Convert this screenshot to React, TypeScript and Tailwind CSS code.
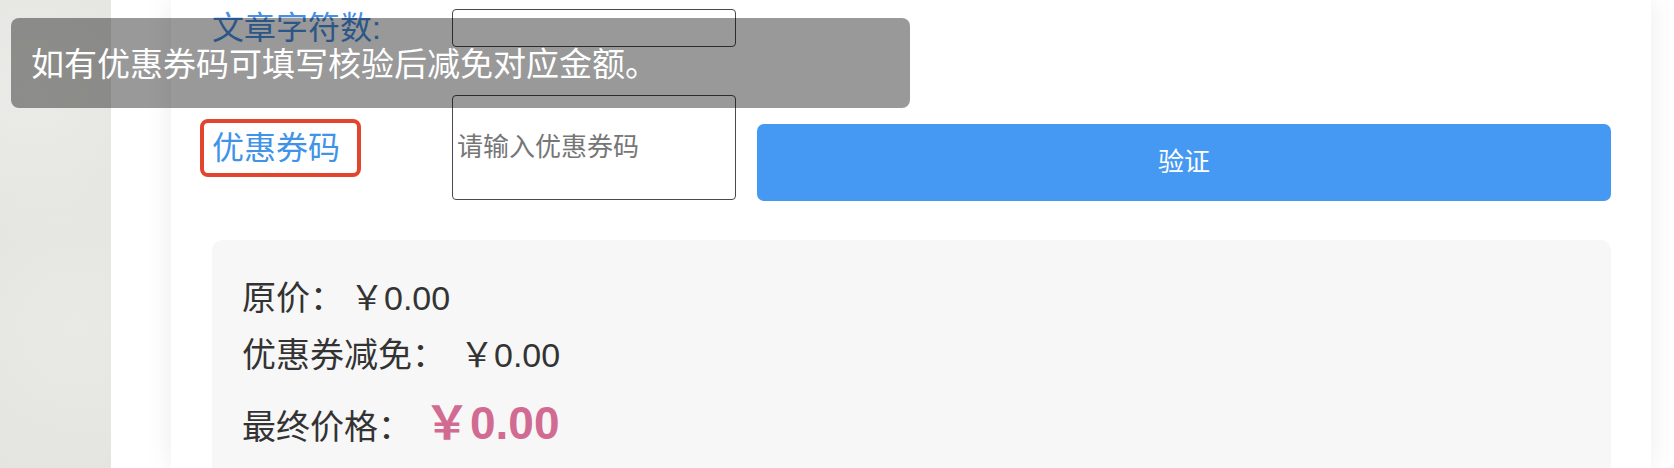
import React from "react";

export default function App() {
  return (
    <div className="relative flex h-[468px] w-[1674px] overflow-hidden bg-white font-['Liberation_Sans','Noto_Sans_CJK_SC',sans-serif]">
      {/* textured side strip */}
      <div className="h-full w-[111px] shrink-0 bg-[#e4e4e0] bg-[radial-gradient(circle_at_30%_20%,#ebebe7_0,transparent_40%),radial-gradient(circle_at_70%_70%,#e9e9e5_0,transparent_45%)]" />

      {/* main page */}
      <div className="flex h-full flex-1 bg-white pl-[60px]">
        <div className="h-full w-[1480px] shrink-0 bg-white pl-[41px] pr-[40px] pt-[9px] shadow-[0_0_28px_rgba(0,0,0,0.08)]">
          {/* row 1 */}
          <div className="flex h-[38px] items-center">
            <div className="w-[240px] text-[32px] leading-[38px] text-[#4a90e2]">文章字符数:</div>
            <div className="h-[38px] w-[284px] rounded-[4px] border-[1.5px] border-[#4a4a4a] bg-white" />
          </div>

          {/* row 2 */}
          <div className="mt-[48px] flex items-center">
            <div className="w-[240px]">
              <span className="relative inline-block text-[32px] leading-[48px] text-[#4193e8]">
                优惠券码
                <span className="absolute bottom-[-5px] left-[-12px] right-[-21px] top-[-5px] rounded-[8px] border-[4px] border-[#e2442d]" />
              </span>
            </div>
            <div className="flex h-[105px] w-[284px] items-center rounded-[4px] border-[1.5px] border-[#4a4a4a] bg-white pl-[4px] text-[26px] text-[#767676]">
              请输入优惠券码
            </div>
            <button className="ml-[21px] mb-[-1px] flex h-[77px] w-[854px] items-center justify-center self-end rounded-[7px] bg-[#4699f2] text-[26px] text-white">
              验证
            </button>
          </div>

          {/* summary */}
          <div className="mt-[40px] h-[260px] w-[1399px] rounded-[10px] bg-[#f7f7f7] pl-[30px] pt-[30px] text-[34px] text-[#333333]">
            <div className="flex h-[57px] items-center leading-[57px]">
              <span>原价：</span>
              <span className="ml-[6px]">￥0.00</span>
            </div>
            <div className="flex h-[57px] items-center leading-[57px]">
              <span>优惠券减免：</span>
              <span className="ml-[14px]">￥0.00</span>
            </div>
            <div className="mt-[5px] flex h-[68px] items-baseline leading-[68px]">
              <span>最终价格：</span>
              <span className="ml-[12px] text-[46px] font-bold text-[#d16b92]">￥0.00</span>
            </div>
          </div>
        </div>
      </div>

      {/* toast */}
      <div className="absolute left-[11px] top-[18px] flex h-[90px] w-[899px] items-center rounded-[8px] bg-[rgba(0,0,0,0.4)] pl-[20px] font-['Noto_Sans_CJK_SC',sans-serif] text-[33px] text-white">
        如有优惠券码可填写核验后减免对应金额。
      </div>
    </div>
  );
}
